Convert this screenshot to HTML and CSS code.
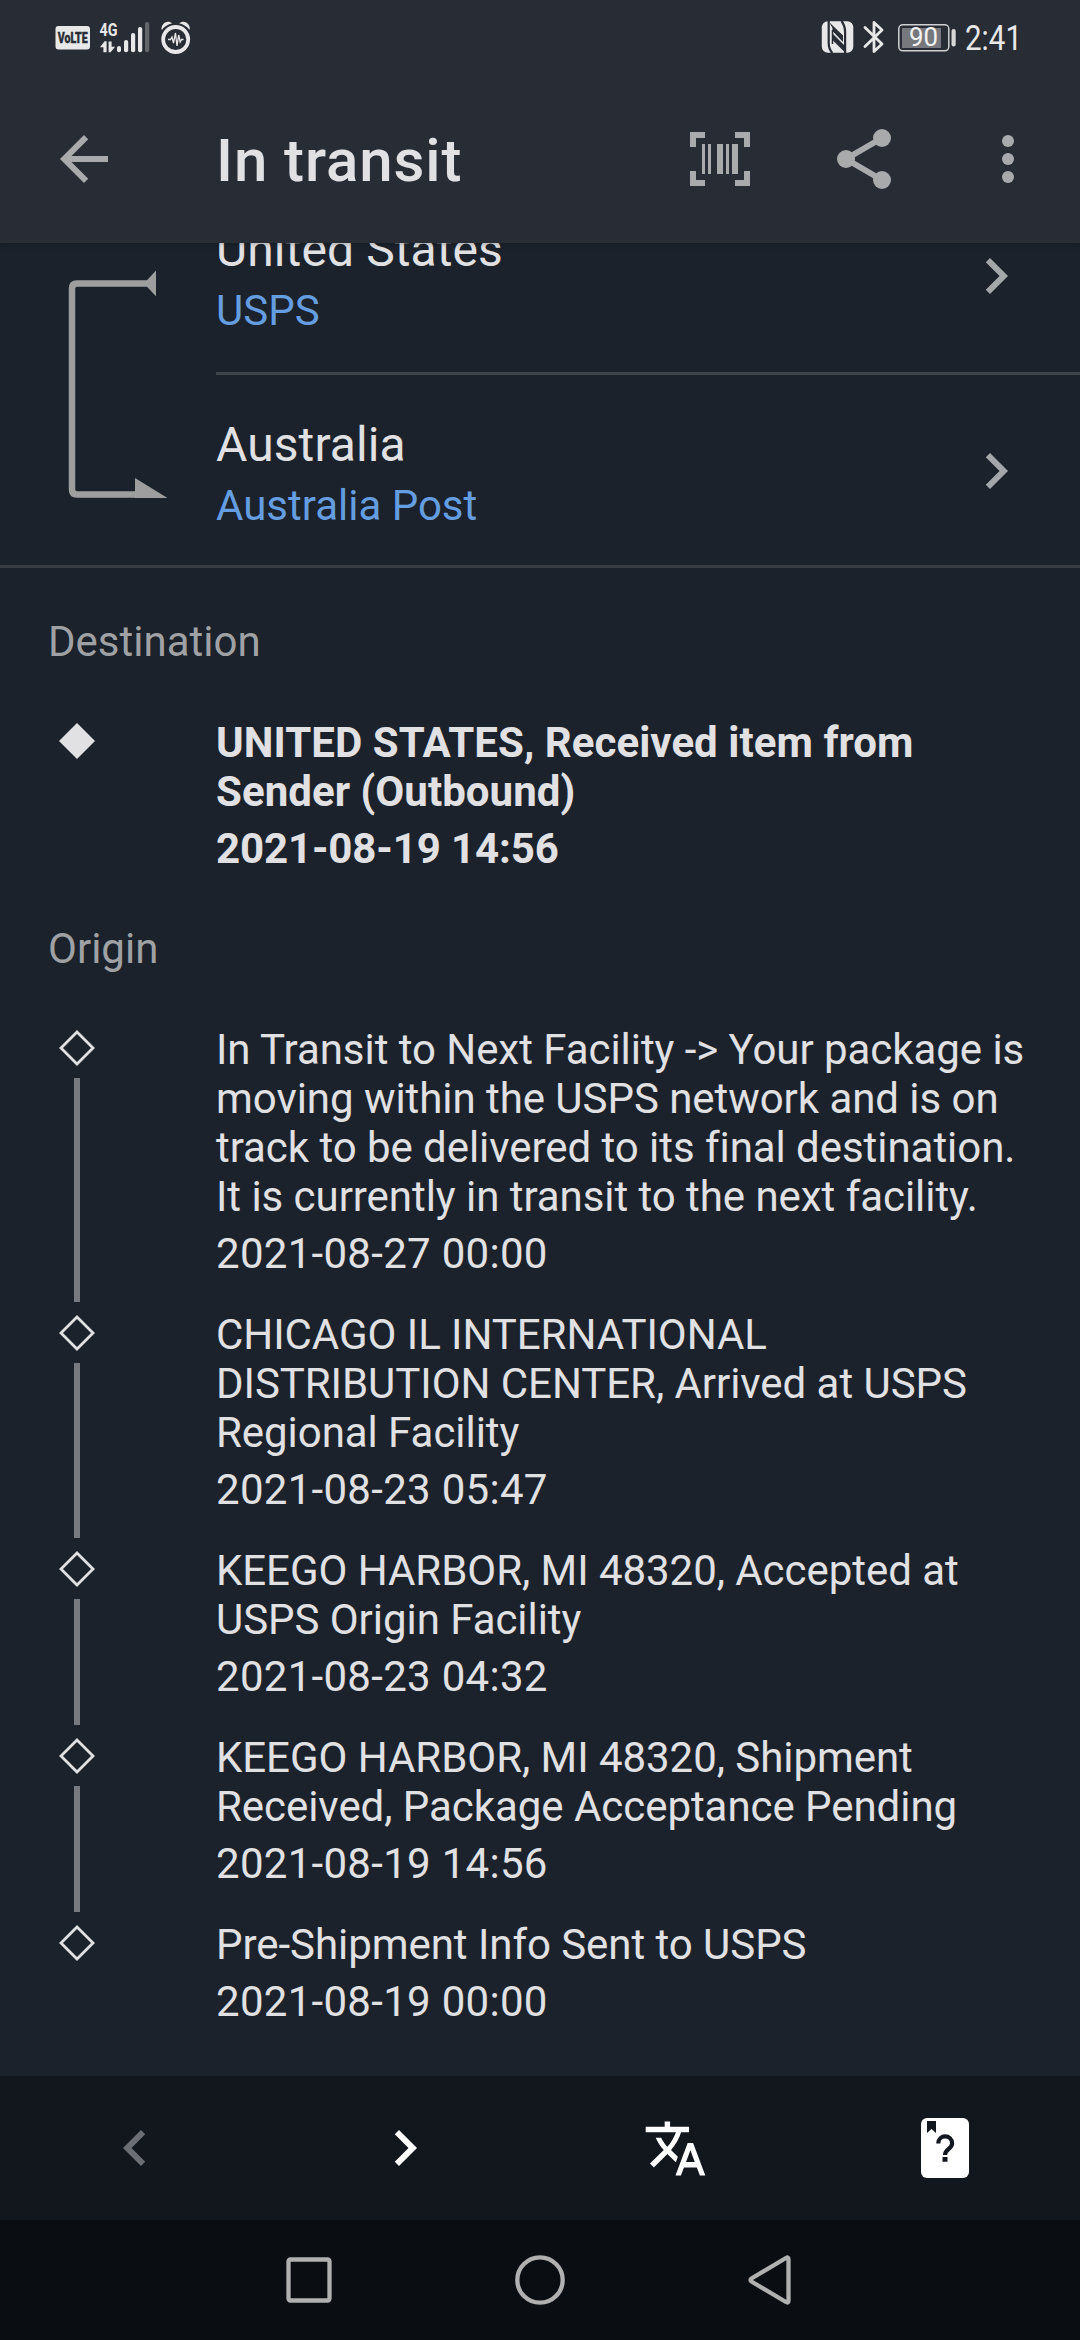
FILE: index.html
```html
<!DOCTYPE html>
<html lang="en">
<head>
<meta charset="utf-8">
<title>In transit</title>
<link rel="stylesheet" href="styles.css">
</head>
<body>
<div class="screen">
  <header class="top">
    <div class="status">
      <svg class="volte" width="36" height="26" viewBox="0 0 36 26"><rect x="0.5" y="1" width="34.5" height="23.5" rx="3" fill="#e8e8e8"/><text x="2.7" y="18.3" class="volte-text" textLength="30" lengthAdjust="spacingAndGlyphs">VoLTE</text></svg>
      <svg class="signal" width="52" height="38" viewBox="99 16 52 38" fill="#e8e8e8">
        <text x="99.5" y="35.5" class="net-text" textLength="18" lengthAdjust="spacingAndGlyphs">4G</text>
        <path d="M100 47.3l4.6-6h2V52.3h-3.2v-5zM108.6 41.5h3v5.2h3.5l-4.5 5.6h-2z"/>
        <rect x="117" y="46" width="4" height="6.3" rx="2"/><rect x="124" y="40" width="4.2" height="12.3" rx="2"/><rect x="131" y="33" width="4.2" height="19.3" rx="2"/><rect x="138" y="27" width="4.2" height="25.3" rx="2"/><rect x="145" y="22" width="4.2" height="30.3" rx="2" fill="#63666b"/>
      </svg>
      <svg class="alarm" width="32" height="34" viewBox="160 20 32 34">
        <g fill="#e8e8e8"><path d="M161.8 30c-1.6-5.2 5-11.3 10.5-6.7-4.400 1-7.800 3.200-10.500 6.700z"/><path d="M189.600 30c1.600-5.200-5-11.300-10.500-6.700 4.400 1 7.800 3.200 10.500 6.700z"/></g>
        <circle cx="175.700" cy="39.500" r="12.500" fill="none" stroke="#e8e8e8" stroke-width="3.800"/>
        <path d="M168 39.500h2.500l1.500-2.500 1.500 6 2-10 1.500 13 1.700-11 1.500 7 1.300-2.500h2" fill="none" stroke="#e8e8e8" stroke-width="1.300"/>
      </svg>
      <div class="status-right">
        <svg width="33" height="34" viewBox="820.500 20 33 34"><rect x="821.300" y="21.300" width="31.500" height="31.400" rx="6" fill="#e8e8e8"/><g fill="none" stroke="#282c34" stroke-width="2.200"><path d="M828.200 21v22q0 6 3.600 10"/><path d="M844.600 53V32q0-6-3.600-11"/></g><path d="M828.500 22l14 13.500v6.500l-10.500-11v-3z" fill="#282c34"/><path d="M832 33.500l13 13v6.500l-13-13z" fill="#282c34"/><path d="M832 30v14" stroke="#282c34" stroke-width="1.500"/></svg>
        <svg class="bluetooth" width="22" height="34" viewBox="863 20 22 34" fill="none" stroke="#e8e8e8" stroke-width="2.800" stroke-linejoin="round" stroke-linecap="round"><path d="M865 27.500l17 16.500-8 7.500v-29l8 7.500-17 16.500"/></svg>
        <svg class="battery" width="60" height="32" viewBox="897 22 60 32"><rect x="898.800" y="24.800" width="50" height="26" rx="4" fill="none" stroke="#d0d0d2" stroke-width="1.500"/><rect x="902" y="28" width="39" height="20" fill="#76787d"/><rect x="951.500" y="29" width="4.200" height="17.500" rx="2" fill="#d8d8d8"/><text x="909" y="46" class="battery-text" textLength="29" lengthAdjust="spacingAndGlyphs">90</text></svg>
        <svg class="clock" width="60" height="46" viewBox="964 15 60 46"><text x="965" y="50" class="clock-text" textLength="57" lengthAdjust="spacingAndGlyphs">2:41</text></svg>
      </div>
    </div>
    <div class="appbar">
      <svg class="back" width="72" height="72" viewBox="0 0 24 24"><path fill="#a9aaac" d="M20 11H7.830l5.590-5.590L12 4l-8 8 8 8 1.410-1.410L7.830 13H20z"/></svg>
      <h1>In transit</h1>
      <svg width="144" height="72" viewBox="648 123 144 72" fill="#a9aaac"><path d="M690 132h15v6h-9v9h-6zM735 132h15v15h-6v-9h-9zM690 171h6v9h9v6h-15zM744 171h6v15h-15v-6h9zM702 144h3v30h-3zM708 144h3v30h-3zM717 144h6v30h-6zM726 144h3v30h-3zM732 144h6v30h-6z"/></svg>
      <svg width="144" height="72" viewBox="792 123 144 72" fill="#a9aaac"><path d="M882 138l-36 21 36 21" fill="none" stroke="#a9aaac" stroke-width="6"/><circle cx="882" cy="138" r="9"/><circle cx="846" cy="159" r="9"/><circle cx="882" cy="180" r="9"/></svg>
      <svg width="144" height="72" viewBox="936 123 144 72" fill="#a9aaac"><circle cx="1008" cy="141" r="6"/><circle cx="1008" cy="159" r="6"/><circle cx="1008" cy="177" r="6"/></svg>
    </div>
  </header>

  <main class="content">
    <section class="route">
      <svg class="bracket" width="216" height="385" viewBox="0 180 216 385"><path d="M151 283.500H77q-5 0-5 5V489.500q0 5 5 5H140" fill="none" stroke="#9e9e9e" stroke-width="6.500"/><path d="M147 280.300l9-9.800v25.800l-9-9.600zM135 478l32.500 20H135z" fill="#9e9e9e"/></svg>
      <div class="carriers">
        <div class="carrier">
          <div><div class="country">United States</div><div class="agency">USPS</div></div>
          <svg width="72" height="72" viewBox="0 0 24 24"><path fill="#a4a7aa" d="M10 6L8.590 7.410 13.170 12l-4.580 4.590L10 18l6-6z"/></svg>
        </div>
        <div class="carrier">
          <div><div class="country">Australia</div><div class="agency">Australia Post</div></div>
          <svg width="72" height="72" viewBox="0 0 24 24"><path fill="#a4a7aa" d="M10 6L8.590 7.410 13.170 12l-4.580 4.590L10 18l6-6z"/></svg>
        </div>
      </div>
    </section>

    <section class="events">
      <h2>Destination</h2>
      <article class="event latest">
        <div class="rail"><svg width="46" height="46" viewBox="-23 -23 46 46"><path d="M0-18L18 0 0 18-18 0z" fill="#e1e1e4"/></svg></div>
        <div><p>UNITED STATES, Received item from Sender (Outbound)</p><time>2021-08-19 14:56</time></div>
      </article>
      <h2>Origin</h2>
      <article class="event">
        <div class="rail"><svg width="46" height="46" viewBox="-23 -23 46 46"><path d="M0-16L16 0 0 16-16 0z"/></svg><i></i></div>
        <div><p>In Transit to Next Facility -&gt; Your package is moving within the USPS network and is on track to be delivered to its final destination. It is currently in transit to the next facility.</p><time>2021-08-27 00:00</time></div>
      </article>
      <article class="event">
        <div class="rail"><svg width="46" height="46" viewBox="-23 -23 46 46"><path d="M0-16L16 0 0 16-16 0z"/></svg><i></i></div>
        <div><p>CHICAGO IL INTERNATIONAL DISTRIBUTION CENTER, Arrived at USPS Regional Facility</p><time>2021-08-23 05:47</time></div>
      </article>
      <article class="event">
        <div class="rail"><svg width="46" height="46" viewBox="-23 -23 46 46"><path d="M0-16L16 0 0 16-16 0z"/></svg><i></i></div>
        <div><p>KEEGO HARBOR, MI 48320, Accepted at USPS Origin Facility</p><time>2021-08-23 04:32</time></div>
      </article>
      <article class="event">
        <div class="rail"><svg width="46" height="46" viewBox="-23 -23 46 46"><path d="M0-16L16 0 0 16-16 0z"/></svg><i></i></div>
        <div><p>KEEGO HARBOR, MI 48320, Shipment Received, Package Acceptance Pending</p><time>2021-08-19 14:56</time></div>
      </article>
      <article class="event">
        <div class="rail"><svg width="46" height="46" viewBox="-23 -23 46 46"><path d="M0-16L16 0 0 16-16 0z"/></svg></div>
        <div><p>Pre-Shipment Info Sent to USPS</p><time>2021-08-19 00:00</time></div>
      </article>
    </section>
  </main>

  <nav class="toolbar">
    <svg width="72" height="72" viewBox="0 0 24 24"><path fill="#6b6e73" d="M15.410 7.410L14 6l-6 6 6 6 1.410-1.410L10.830 12z"/></svg>
    <svg width="72" height="72" viewBox="0 0 24 24"><path fill="#fff" d="M10 6L8.590 7.410 13.170 12l-4.580 4.590L10 18l6-6z"/></svg>
    <svg width="65" height="65" viewBox="0 0 24 24"><path fill="#fff" d="M12.870 15.070l-2.540-2.510.03-.03c1.740-1.940 2.980-4.170 3.710-6.530H17V4h-7V2H8v2H1v1.990h11.170C11.500 7.920 10.440 9.750 9 11.350 8.070 10.320 7.300 9.190 6.690 8h-2c.730 1.630 1.730 3.170 2.980 4.560l-5.090 5.020L4 19l5-5 3.110 3.110.76-2.040zM18.500 10h-2L12 22h2l1.120-3h4.750L21 22h2l-4.500-12zm-2.620 7l1.620-4.330L19.120 17h-3.240z"/></svg>
    <svg width="72" height="72" viewBox="909 2112 72 72"><rect x="921" y="2118" width="48" height="60" rx="6" fill="#fff"/><path d="M927 2121h9v12l-4.500-4-4.500 4zM942.500 2157h5v4.700h-5z" fill="#12171e"/><path d="M938.300 2143.500c0-9.400 13.800-9.400 13.800 0 0 5.300-7.100 5.500-7.100 11.500" fill="none" stroke="#12171e" stroke-width="4.200"/></svg>
  </nav>
  <nav class="system">
    <svg width="54" height="54" viewBox="-27 -27 54 54"><rect x="-20.500" y="-20.500" width="41" height="41" rx="2"/></svg>
    <svg width="54" height="54" viewBox="-27 -27 54 54"><circle r="22.700"/></svg>
    <svg width="54" height="54" viewBox="-27 -27 54 54"><path d="M17.500-20.500Q17.500-23.500 15-22L-19.500-1.500Q-21.500 0-19.500 1.500L15 22Q17.500 23.500 17.500 20.500z"/></svg>
  </nav>
</div>
</body>
</html>
```
FILE: styles.css
```css
* { box-sizing: border-box; margin: 0; padding: 0; }
body { background: #1b222b; font-family: Roboto, "Liberation Sans", sans-serif; color: #e1e1e4; }
svg { display: block; flex: none; overflow: visible; }
.screen { width: 1080px; height: 2340px; display: flex; flex-direction: column; overflow: hidden; }

.top { flex: none; height: 243px; background: #282c34; box-shadow: 0 1px 5px rgba(0, 0, 0, .25); z-index: 1; }
.status { height: 75px; display: flex; align-items: flex-start; padding: 15px 56px 0 55px; }
.volte { margin-top: 10px; }
.signal { margin: 1px 0 0 8px; }
.alarm { margin: 5px 0 0 9px; }
.status-right { margin-left: auto; display: flex; }
.status-right svg { margin-top: 5px; }
.status-right .bluetooth { margin-left: 9.5px; }
.status-right .battery { margin: 7px 0 0 12px; }
.status-right .clock { margin: 0 0 0 7px; }
.volte-text { font-size: 15.5px; font-weight: 900; fill: #282c34; stroke: #282c34; stroke-width: .4px; }
.net-text { font-size: 18.5px; font-weight: 700; }
.battery-text { font-size: 26px; fill: #f2f2f2; }
.clock-text { font-size: 35px; fill: #e8e8e8; }

.appbar { height: 168px; display: flex; align-items: center; padding-left: 48px; }
.appbar h1 { flex: 1; margin-left: 96px; font-size: 60px; line-height: 70px; font-weight: 500; letter-spacing: .9px; padding-top: 4px; }

.content { flex: 1; min-height: 0; overflow: hidden; }
.route { display: flex; margin-top: -63px; border-bottom: 3px solid #373b43; }
.carriers { flex: 1; }
.carrier { display: flex; justify-content: space-between; height: 192px; padding: 42px 48px 0 0; }
.carrier + .carrier { border-top: 3px solid #40444b; height: 193px; }
.carrier svg { margin-top: 18px; }
.country { font-size: 48px; line-height: 56px; letter-spacing: .1px; }
.agency { font-size: 42px; line-height: 49px; margin-top: 8px; color: #649de0; }

.events { padding: 30px 48px 0; font-size: 42px; line-height: 49px; }
.events h2 { font-size: 42px; line-height: 49px; font-weight: 400; color: #9fa1a4; padding: 19px 0 52px; height: 120px; }
.event { display: grid; grid-template-columns: 168px 1fr; padding-bottom: 32px; letter-spacing: -.05px; }
.event time { display: block; margin-top: 8px; letter-spacing: .29px; }
.latest { font-weight: 700; letter-spacing: .05px; }
.latest time { letter-spacing: -.12px; }
.rail { display: flex; flex-direction: column; align-items: flex-start; padding-left: 6px; margin-bottom: -24px; }
.rail path { stroke: #e1e1e4; stroke-width: 2.8; fill: none; }
.latest .rail path { stroke: none; fill: #e1e1e4; }
.rail i { flex: 1; width: 6px; margin: 7px 0 0 20px; background: #76797f; }

.toolbar { flex: none; height: 144px; background: #12171e; display: grid; grid-template-columns: repeat(4, 1fr); place-items: center; }
.system { flex: none; height: 120px; background: #0a0e12; display: flex; justify-content: center; align-items: center; gap: 177px; }
.system svg { fill: none; stroke: #b0b0b0; stroke-width: 4.3; }
```
